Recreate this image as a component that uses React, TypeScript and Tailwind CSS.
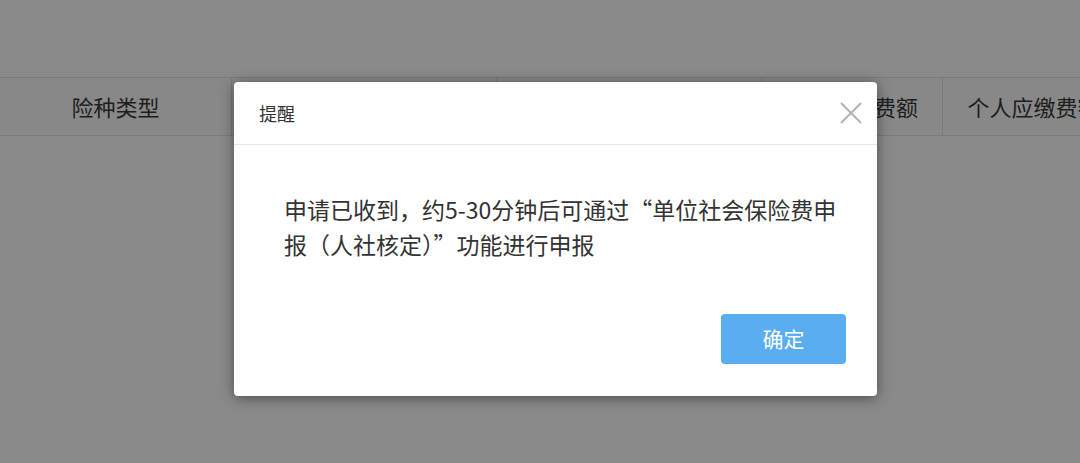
import React from "react";

const font = { fontFamily: '"Noto Sans CJK SC", "Noto Sans", sans-serif' };

const columns = [
  { label: "险种类型", width: "w-[232px]" },
  { label: "缴费基数", width: "w-[265px]" },
  { label: "缴费比例", width: "w-[265px]" },
  { label: "单位应缴费额", width: "w-[181px]" },
  { label: "个人应缴费额", width: "w-[181px]" },
];

function ReminderModal() {
  return (
    <div className="absolute left-[234px] top-[82px] flex h-[314px] w-[643px] flex-col rounded-[4px] bg-white shadow-[0_2px_14px_rgba(0,0,0,0.45)]">
      <div className="flex h-[63px] shrink-0 items-center justify-between border-b border-[#e6e6e6] pl-[25px] pr-[14px]">
        <span className="text-[18px] text-[#333]">提醒</span>
        <button className="flex h-[24px] w-[24px] items-center justify-center">
          <svg width="22" height="22" viewBox="0 0 22 22" fill="none">
            <path d="M1 1L21 21M21 1L1 21" stroke="#b0b0b0" strokeWidth="1.8" />
          </svg>
        </button>
      </div>
      <div className="flex-1 pl-[50px] pr-[35px] pt-[47px]">
        <p className="text-[23px] leading-[35px] text-[#333]">
          申请已收到，约5-30分钟后可通过“单位社会保险费申报（人社核定）”功能进行申报
        </p>
      </div>
      <div className="flex justify-end pb-[32px] pr-[31px]">
        <button className="h-[50px] w-[125px] rounded-[4px] bg-[#59adf0] text-[21px] text-white">
          确定
        </button>
      </div>
    </div>
  );
}

export default function App() {
  return (
    <div className="relative h-[463px] w-[1080px] overflow-hidden bg-[#8a8a8a]" style={font}>
      <div className="pt-[77px]">
        <div className="flex h-[59px] border-y border-[#7b7b7b] bg-[#888888]">
          {columns.map((c, i) => (
            <div
              key={c.label}
              className={`${c.width} flex shrink-0 items-center justify-center whitespace-nowrap text-[22px] text-[#1e1e1e] ${i < columns.length - 1 ? "border-r border-[#7b7b7b]" : ""}`}
            >
              {c.label}
            </div>
          ))}
        </div>
      </div>
      <ReminderModal />
    </div>
  );
}
